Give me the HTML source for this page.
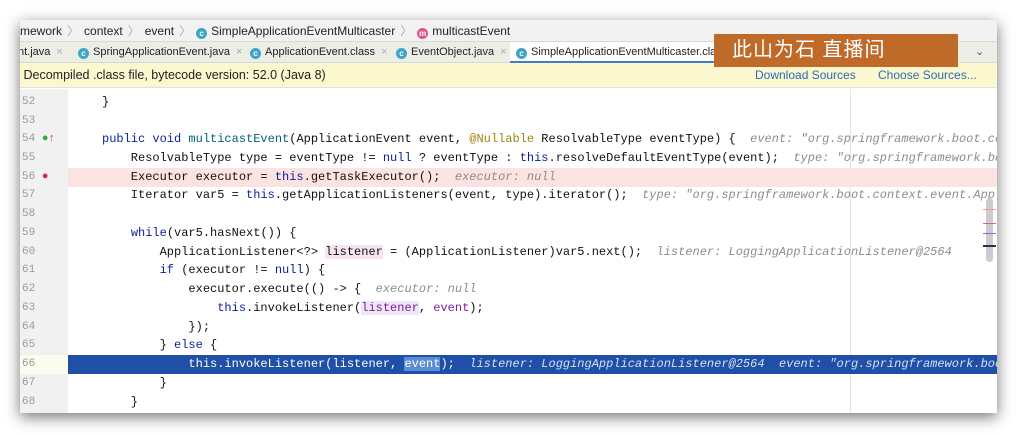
<!DOCTYPE html>
<html><head><meta charset="utf-8"><style>
*{margin:0;padding:0;box-sizing:border-box}
body{width:1017px;height:434px;background:#fff;position:relative;overflow:hidden;font-family:"Liberation Sans",sans-serif}
.win{position:absolute;left:20px;top:20px;width:977px;height:393px;background:#fff;box-shadow:0 4px 14px rgba(0,0,0,.55);overflow:hidden}
.bc{position:absolute;left:0;top:0;width:977px;height:22px;background:#f2f2f2;border-bottom:1px solid #d8d8d8;font-size:12px;color:#222;line-height:22px;padding-left:0;white-space:nowrap}
.bc .sep{color:#aaa;margin:0 5px}
.ic{display:inline-block;width:11px;height:11px;border-radius:50%;vertical-align:-1px;margin-right:4px;font-size:8px;line-height:11px;text-align:center;color:#fff;font-weight:bold}
.tabs{position:absolute;left:0;top:22px;width:977px;height:21px;background:#eceee6;font-size:11px;color:#222;white-space:nowrap;border-bottom:1px solid #d8d8d8}
.tab{position:absolute;top:0;height:21px;line-height:20px}
.x{color:#aaa;margin-left:6px}
.warn{position:absolute;left:0;top:43px;width:977px;height:25px;background:#fbf8d0;font-size:12.5px;line-height:25px;color:#222;border-bottom:1px solid #e0e0e0}
.warn a{position:absolute;color:#2a6cb8;font-size:12px}
.gut{position:absolute;left:0;top:69px;width:48px;height:330px;background:#f1f1f1}
.code{position:absolute;left:0;top:2px;width:977px;font-family:"Liberation Mono",monospace;font-size:12px;white-space:pre}
.ln{position:absolute;left:0;width:977px;height:19px;line-height:19px}
.num{position:absolute;left:2px;color:#999;font-size:11px}
.t{position:absolute;left:82px;color:#111}
.k{color:#0b1f9e}.h{color:#8c8c8c;font-style:italic}.an{color:#9e880d}.pv{color:#7a1e9e}
.wm{position:absolute;left:714px;top:34px;width:244px;height:33px;background:#bf6a28;color:#fff;font-family:"Liberation Sans","Noto Sans CJK SC",sans-serif;font-size:20px;line-height:33px;padding-left:18px;letter-spacing:1px}
</style></head><body>
<div class="win">
<div class="bc">mework<span class="sep">〉</span>context<span class="sep">〉</span>event<span class="sep">〉</span><span class="ic" style="background:#3fa4c6">c</span>SimpleApplicationEventMulticaster<span class="sep">〉</span><span class="ic" style="background:#d9578a">m</span>multicastEvent</div>
<div class="tabs">
<div class="tab" style="left:-2px">nt.java<span class="x">×</span></div>
<div class="tab" style="left:58px"><span class="ic" style="background:#3fa4c6">c</span>SpringApplicationEvent.java<span class="x">×</span></div>
<div class="tab" style="left:230px"><span class="ic" style="background:#3fa4c6">c</span>ApplicationEvent.class<span class="x">×</span></div>
<div class="tab" style="left:376px"><span class="ic" style="background:#3fa4c6">c</span>EventObject.java<span class="x">×</span></div>
<div class="tab" style="left:490px;background:#fff;border-bottom:2px solid #3d7fc8;width:220px;padding-left:6px"><span class="ic" style="background:#3fa4c6">c</span>SimpleApplicationEventMulticaster.class</div>
<div class="tab" style="left:928px;color:#999">×</div>
<div class="tab" style="left:955px;color:#555">⌄</div>
</div>
<div class="warn">&nbsp;Decompiled .class file, bytecode version: 52.0 (Java 8)<a style="left:735px">Download Sources</a><a style="left:858px">Choose Sources...</a></div>
<div class="gut"></div>
<div style="position:absolute;left:830px;top:69px;width:1px;height:330px;background:#e4e4e4"></div>
<div class="code">
<div class="ln" style="top:71px"><span class="num">52</span><span class="t">}</span></div>
<div class="ln" style="top:90px"><span class="num">53</span></div>
<div class="ln" style="top:108px"><span class="num">54 <span style="color:#3a3">●</span><span style="color:#d33">↑</span></span><span class="t"><span class="k">public void</span> <span style="color:#00627a">multicastEvent</span>(ApplicationEvent event, <span class="an">@Nullable</span> ResolvableType eventType) {  <span class="h">event: "org.springframework.boot.co</span></span></div>
<div class="ln" style="top:127px"><span class="num">55</span><span class="t">    ResolvableType type = eventType != <span class="k">null</span> ? eventType : <span class="k">this</span>.resolveDefaultEventType(event);  <span class="h">type: "org.springframework.bo</span></span></div>
<div class="ln" style="top:146px;background:#fbe3e1;left:48px;width:929px"></div>
<div class="ln" style="top:146px"><span class="num">56 <span style="color:#d3284a">●</span></span><span class="t">    Executor executor = <span class="k">this</span>.getTaskExecutor();  <span class="h">executor: null</span></span></div>
<div class="ln" style="top:164px"><span class="num">57</span><span class="t">    Iterator var5 = <span class="k">this</span>.getApplicationListeners(event, type).iterator();  <span class="h">type: "org.springframework.boot.context.event.Appl</span></span></div>
<div class="ln" style="top:183px"><span class="num">58</span></div>
<div class="ln" style="top:202px"><span class="num">59</span><span class="t">    <span class="k">while</span>(var5.hasNext()) {</span></div>
<div class="ln" style="top:221px"><span class="num">60</span><span class="t">        ApplicationListener&lt;?&gt; <span style="background:#f6e4ee">listener</span> = (ApplicationListener)var5.next();  <span class="h">listener: LoggingApplicationListener@2564</span></span></div>
<div class="ln" style="top:239px"><span class="num">61</span><span class="t">        <span class="k">if</span> (executor != <span class="k">null</span>) {</span></div>
<div class="ln" style="top:258px"><span class="num">62</span><span class="t">            executor.execute(() -&gt; {  <span class="h">executor: null</span></span></div>
<div class="ln" style="top:277px"><span class="num">63</span><span class="t">                <span class="k">this</span>.invokeListener(<span class="pv" style="background:#f0e6f6">listener</span>, <span class="pv">event</span>);</span></div>
<div class="ln" style="top:296px"><span class="num">64</span><span class="t">            });</span></div>
<div class="ln" style="top:314px"><span class="num">65</span><span class="t">        } <span class="k">else</span> {</span></div>
<div class="ln" style="top:333px;background:#1f4fa6;left:48px;width:929px"></div>
<div class="ln" style="top:333px"><span class="num" style="background:#fbfbee;left:0;width:48px;padding-left:2px">66</span><span class="t" style="color:#fff">            this.invokeListener(listener, <span style="background:#5d8bd6">event</span>);  <span style="font-style:italic;color:#d6e0f5">listener: LoggingApplicationListener@2564  event: "org.springframework.boo</span></span></div>
<div class="ln" style="top:352px"><span class="num">67</span><span class="t">        }</span></div>
<div class="ln" style="top:371px"><span class="num">68</span><span class="t">    }</span></div>
</div>
<div style="position:absolute;left:966px;top:178px;width:7px;height:64px;background:#ccc;border-radius:4px"></div>
<div style="position:absolute;left:963px;top:189px;width:13px;height:1px;background:#e99"></div>
<div style="position:absolute;left:963px;top:203px;width:13px;height:1px;background:#c6a"></div>
<div style="position:absolute;left:963px;top:213px;width:13px;height:1px;background:#a5e"></div>
<div style="position:absolute;left:963px;top:225px;width:13px;height:2px;background:#235"></div>
</div>
<div class="wm">此山为石 直播间</div>
</body></html>
